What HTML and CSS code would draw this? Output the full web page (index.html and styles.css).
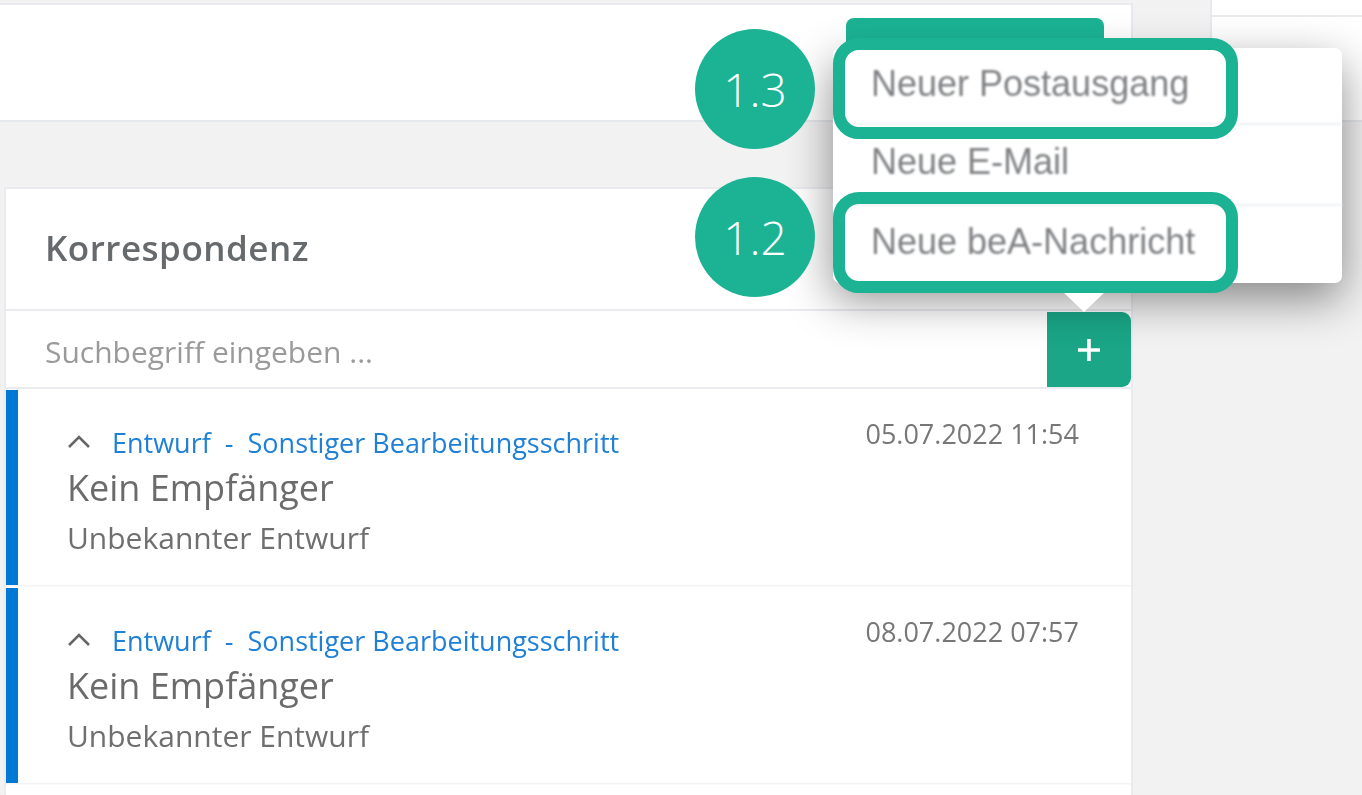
FILE: index.html
```html
<!DOCTYPE html>
<html lang="de">
<head>
    <meta charset="UTF-8">
    <meta name="viewport" content="width=device-width, initial-scale=1.0">
    <title>Korrespondenz</title>
    <link rel="stylesheet" href="styles.css">
</head>
<body>
    <div class="page">
        <div class="layout">
            <main class="main-column">
                <div class="top-panel"></div>
                <section class="card">
                    <h2 class="card-title">Korrespondenz</h2>
                    <div class="search-row">
                        <div class="search-text">Suchbegriff eingeben ...</div>
                        <button class="add-button" type="button">
                            <svg width="24" height="24" viewBox="0 0 24 24"><path d="M12 1v22M1 12h22" stroke="#fff" stroke-width="3.6" fill="none"/></svg>
                        </button>
                    </div>
                    <article class="mail-row">
                        <div class="mail-body">
                            <div class="mail-type">
                                <svg class="chevron" width="24" height="14" viewBox="0 0 24 14"><path d="M2 13L12 3l10 10" stroke="#666" stroke-width="2.6" fill="none"/></svg>
                                <span>Entwurf&nbsp; -&nbsp; Sonstiger Bearbeitungsschritt</span>
                            </div>
                            <div class="mail-to">Kein Empfänger</div>
                            <div class="mail-subject">Unbekannter Entwurf</div>
                        </div>
                        <div class="mail-date">05.07.2022 11:54</div>
                    </article>
                    <article class="mail-row">
                        <div class="mail-body">
                            <div class="mail-type">
                                <svg class="chevron" width="24" height="14" viewBox="0 0 24 14"><path d="M2 13L12 3l10 10" stroke="#666" stroke-width="2.6" fill="none"/></svg>
                                <span>Entwurf&nbsp; -&nbsp; Sonstiger Bearbeitungsschritt</span>
                            </div>
                            <div class="mail-to">Kein Empfänger</div>
                            <div class="mail-subject">Unbekannter Entwurf</div>
                        </div>
                        <div class="mail-date">08.07.2022 07:57</div>
                    </article>
                </section>
            </main>
            <aside class="side-panel"></aside>
        </div>

        <div class="back-button"></div>
        <div class="menu">
            <div class="menu-item">Neuer Postausgang</div>
            <div class="menu-item">Neue E-Mail</div>
            <div class="menu-item">Neue beA-Nachricht</div>
        </div>
        <div class="menu-arrow"></div>

        <div class="step-circle step-one">1.3</div>
        <div class="step-frame frame-one"></div>
        <div class="step-circle step-two">1.2</div>
        <div class="step-frame frame-two"></div>
    </div>
</body>
</html>
```

FILE: styles.css
```css
body, html {
    margin: 0;
    padding: 0;
    height: 100%;
    overflow: hidden;
    background: #f2f2f2;
    font-family: 'Open Sans', sans-serif;
}

.page {
    position: relative;
    width: 1362px;
    height: 795px;
    overflow: hidden;
}

.layout {
    display: flex;
    align-items: flex-start;
    height: 795px;
}

.main-column {
    width: 1133px;
    flex-shrink: 0;
}

.top-panel {
    height: 115px;
    margin-top: 3px;
    background: #fff;
    border-top: 2px solid #e9ebee;
    border-bottom: 2px solid #e6e9ed;
    border-right: 2px solid #e6e9ed;
}

.card {
    height: 620px;
    margin: 65px 0 0 4px;
    background: #fff;
    border: 2px solid #e9ebee;
}

.card-title {
    margin: 0;
    height: 120px;
    padding-left: 39px;
    line-height: 117px;
    font-size: 35px;
    font-weight: 600;
    letter-spacing: 0.5px;
    color: #666a6d;
    border-bottom: 2px solid #e9ebee;
    filter: blur(0.6px);
}

.search-row {
    display: flex;
    justify-content: space-between;
    height: 76px;
    border-bottom: 2px solid #e9ebee;
}

.search-text {
    padding-left: 39px;
    line-height: 81px;
    font-size: 30px;
    color: #9a9a9a;
    filter: blur(0.7px);
}

.add-button {
    display: flex;
    align-items: center;
    justify-content: center;
    width: 84px;
    height: 75px;
    margin-top: 1px;
    padding: 0;
    border: none;
    border-radius: 0 9px 9px 0;
    background: #1aa687;
}

.mail-row {
    display: flex;
    justify-content: space-between;
    height: 195px;
    margin-bottom: 3px;
    border-left: 12px solid #0078d4;
    box-shadow: 0 1.5px 0 #f3f3f3;
}

.mail-row:first-of-type {
    margin-top: 1px;
}

.mail-body {
    padding: 35px 0 0 49px;
    filter: blur(0.7px);
}

.mail-type {
    display: flex;
    align-items: center;
    gap: 21px;
    font-size: 27px;
    line-height: 36px;
    color: #1f80d6;
}

.chevron {
    margin-bottom: 4px;
}

.mail-to {
    margin-top: 2px;
    font-size: 36px;
    line-height: 50px;
    color: #6b6b6b;
}

.mail-subject {
    margin-top: 4px;
    font-size: 30px;
    line-height: 42px;
    color: #6f6f6f;
}

.mail-date {
    padding: 26px 52px 0 0;
    font-size: 27px;
    line-height: 36px;
    color: #777;
    filter: blur(0.7px);
}

.side-panel {
    width: 152px;
    height: 120px;
    margin-left: 77px;
    background: #fff linear-gradient(#e9ebee, #e9ebee) 0 15px / 100% 2px no-repeat;
    border-left: 2px solid #e6e9ed;
    border-bottom: 2px solid #e6e9ed;
}

/* menu and callouts sit over the page */
.back-button {
    position: absolute;
    left: 846px;
    top: 18px;
    width: 258px;
    height: 40px;
    border-radius: 8px 8px 0 0;
    background: #1bb394;
}

.menu {
    position: absolute;
    left: 833px;
    top: 48px;
    width: 509px;
    height: 235px;
    border-radius: 7px;
    background: #fff;
    box-shadow: 0 16px 46px rgba(0, 0, 0, 0.45);
}

.menu-item {
    height: 77px;
    box-sizing: border-box;
    padding: 16px 0 0 38px;
    font-family: 'Liberation Sans', Arial, sans-serif;
    font-size: 36px;
    line-height: 40px;
    color: #7f8184;
    border-bottom: 2px solid #eef0f2;
    filter: blur(1px);
}

.menu-item:nth-child(2) {
    height: 81px;
    padding-top: 17px;
}

.menu-item:last-child {
    border-bottom: none;
    padding-top: 16px;
}

.menu-arrow {
    position: absolute;
    left: 1064px;
    top: 293px;
    width: 0;
    height: 0;
    border-left: 20px solid transparent;
    border-right: 20px solid transparent;
    border-top: 19px solid #fff;
}

.step-circle {
    position: absolute;
    left: 695px;
    width: 120px;
    height: 120px;
    border-radius: 50%;
    background: #1bb394;
    color: #fff;
    font-size: 46px;
    font-weight: 300;
    line-height: 120px;
    text-align: center;
}

.step-one {
    top: 29px;
}

.step-two {
    top: 177px;
}

.step-frame {
    position: absolute;
    left: 833px;
    width: 405px;
    height: 101px;
    box-sizing: border-box;
    border: 12px solid #1bb394;
    border-radius: 26px;
}

.frame-one {
    top: 38px;
}

.frame-two {
    top: 192px;
}
```
